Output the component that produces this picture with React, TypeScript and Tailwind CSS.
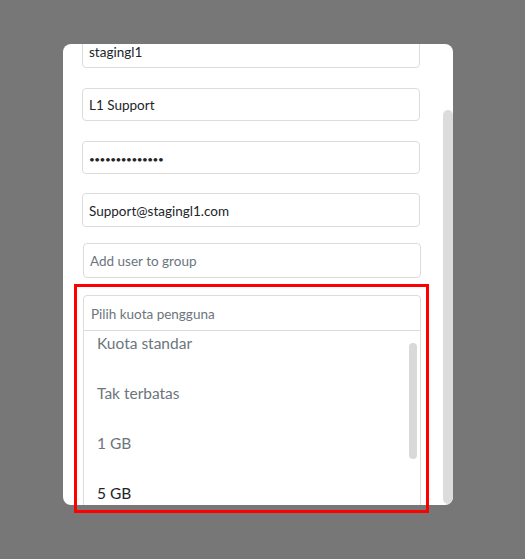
import React from "react";

const fieldBase =
  "w-[338px] shrink-0 border border-[#dcdcdc] rounded-[4px] bg-white px-[6px] pt-[2px] flex items-center text-[13.5px]";

export default function App() {
  const options = ["Kuota standar", "Tak terbatas", "1 GB", "5 GB"];

  return (
    <div
      className="relative w-[525px] h-[559px] bg-[#777777] pl-[63px] pt-[44px] overflow-hidden"
      style={{ fontFamily: "Lato, 'Noto Sans', sans-serif" }}
    >
      {/* Modal */}
      <div className="w-[390px] h-[461px] bg-white rounded-lg overflow-hidden flex">
        {/* Scrolled form body */}
        <div className="flex-1 overflow-hidden pl-[19px]">
          <div className="flex flex-col -mt-[9px]">
            <div className={`${fieldBase} h-[33px] text-[#212529]`}>stagingl1</div>
            <div className={`${fieldBase} h-[33px] mt-[20px] text-[#212529]`}>L1 Support</div>
            <div className={`${fieldBase} h-[33px] mt-[20px] text-[#212529]`}>
              <span className="text-[10px] tracking-[-0.5px] leading-none">••••••••••••••</span>
            </div>
            <div className={`${fieldBase} h-[34px] mt-[19px] text-[#212529]`}>Support@stagingl1.com</div>
            <div className={`${fieldBase} h-[35px] mt-[16px] ml-[1px] text-[#6c757d]`}>
              Add user to group
            </div>

            {/* Quota select, open */}
            <div className="w-[338px] ml-[1px] mt-[17px] flex flex-col">
              <div className="h-[36px] border border-[#dcdcdc] rounded-t-[4px] px-[7px] pt-[2px] flex items-center text-[13.5px] text-[#6c757d]">
                Pilih kuota pengguna
              </div>
              <div className="relative h-[180px] border-x border-b border-[#dcdcdc] overflow-hidden">
                <div className="flex flex-col -mt-[12px]">
                  {options.map((o, i) => (
                    <div
                      key={o}
                      className={`h-[50px] shrink-0 flex items-center px-[13px] text-[15.5px] ${
                        i === options.length - 1 ? "text-[#212529]" : "text-[#6c757d]"
                      }`}
                    >
                      {o}
                    </div>
                  ))}
                </div>
                {/* inner scrollbar */}
                <div className="absolute right-[3px] top-[12px] w-[8px] h-[116px] rounded-full bg-[#d9d9d9]" />
              </div>
            </div>
          </div>
        </div>

        {/* Outer scrollbar */}
        <div className="w-[10px] shrink-0 pt-[66px] pb-[1px] flex">
          <div className="w-[9px] flex-1 rounded-full bg-[#dcdcdc]" />
        </div>
      </div>

      {/* Annotation box */}
      <div className="pointer-events-none absolute left-[74px] top-[284px] w-[355px] h-[229px] border-[3px] border-[#ff0000]" />
    </div>
  );
}
